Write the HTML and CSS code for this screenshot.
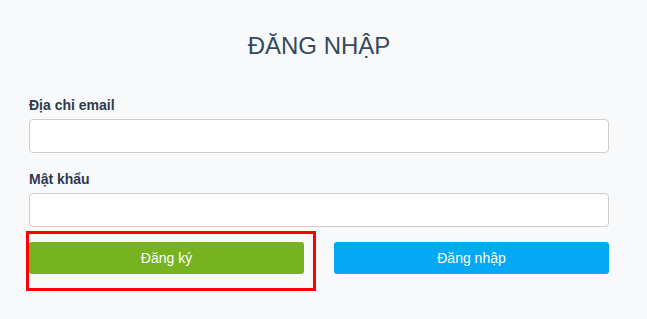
FILE: index.html
```html
<!DOCTYPE html>
<html lang="vi">
<head>
    <meta charset="UTF-8">
    <meta name="viewport" content="width=device-width, initial-scale=1.0">
    <title>Đăng nhập</title>
    <link rel="stylesheet" href="styles.css">
</head>
<body>
    <div class="login">
        <h1 class="login-title">ĐĂNG NHẬP</h1>
        <form class="login-form">
            <label class="field-label" for="email">Địa chỉ email</label>
            <input class="field-input" type="email" id="email">
            <label class="field-label" for="password">Mật khẩu</label>
            <input class="field-input" type="password" id="password">
            <div class="actions">
                <div class="action-cell highlighted">
                    <button type="button" class="btn btn-register">Đăng ký</button>
                </div>
                <div class="action-cell">
                    <button type="submit" class="btn btn-login">Đăng nhập</button>
                </div>
            </div>
        </form>
    </div>
</body>
</html>
```

FILE: styles.css
```css
body {
    margin: 0;
    background-color: #f8f9fb;
    font-family: "Liberation Sans", Arial, sans-serif;
    color: #2c3a4e;
}

.login {
    width: 580px;
    padding: 32px 0 40px 29px;
}

.login-title {
    margin: 0 0 35px;
    font-size: 24px;
    font-weight: normal;
    line-height: 28px;
    text-align: center;
    color: #34495e;
}

.login-form {
    display: flex;
    flex-direction: column;
}

.field-label {
    font-size: 14px;
    font-weight: bold;
    line-height: 20px;
    margin-bottom: 4px;
}

.field-input {
    box-sizing: border-box;
    height: 34px;
    margin: 0 0 16px;
    border: 1px solid #cdcdcd;
    border-radius: 4px;
    background: #fff;
}

.actions {
    display: grid;
    grid-template-columns: 1fr 1fr;
    gap: 30px;
    margin-top: -1px;
}

.action-cell {
    position: relative;
}

.btn {
    display: block;
    width: 100%;
    height: 32px;
    border: none;
    border-radius: 3px;
    color: #fff;
    font-family: "Liberation Sans", Arial, sans-serif;
    font-size: 14px;
    cursor: pointer;
}

.btn-register {
    background-color: #77b21f;
}

.btn-login {
    background-color: #03a9f4;
}

/* red annotation frame around the register button */
.highlighted::after {
    content: "";
    position: absolute;
    left: -3px;
    top: -11px;
    width: 284px;
    height: 54px;
    border: 3px solid #ff0000;
    pointer-events: none;
}
```
